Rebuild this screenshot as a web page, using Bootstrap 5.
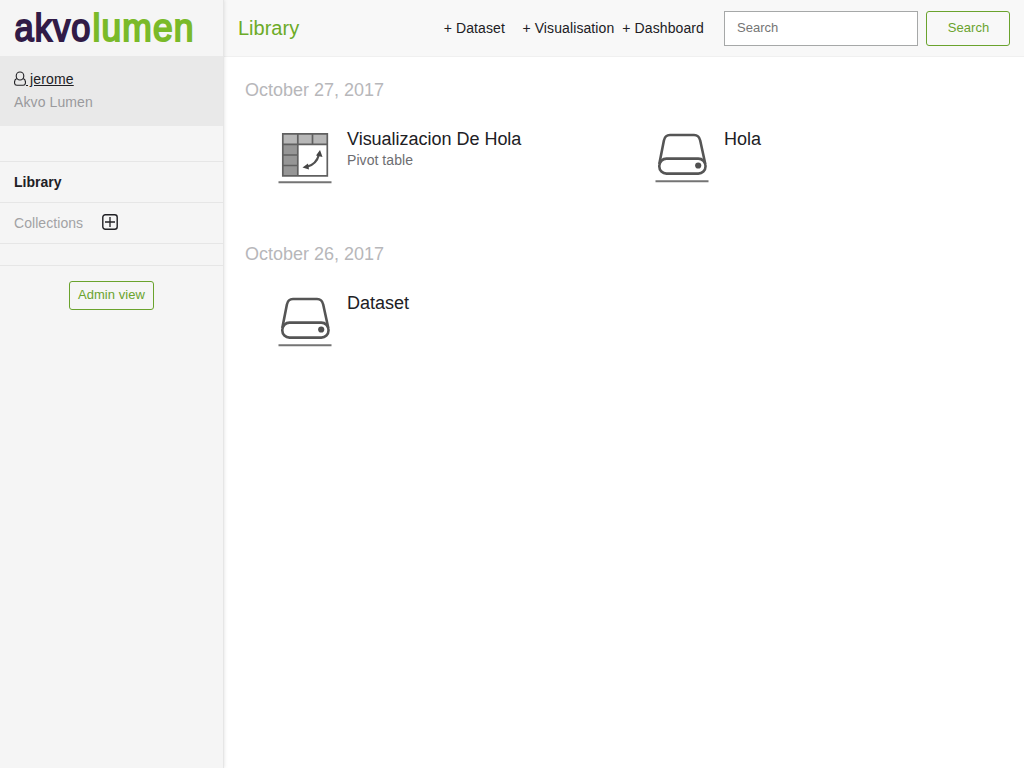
<!DOCTYPE html>
<html lang="en">
<head>
<meta charset="utf-8">
<title>Library</title>
<link href="https://cdn.jsdelivr.net/npm/bootstrap@5.3.0/dist/css/bootstrap.min.css" rel="stylesheet">
<style>
body{font-family:"Liberation Sans",Arial,sans-serif;font-size:14px;line-height:20px;color:#202024}
.side{width:224px;background:#f5f5f5;border-right:1px solid #e6e6e6;box-shadow:0 0 4px rgba(0,0,0,.13);z-index:2}
.brand-box{height:56px}
.brand-box text{letter-spacing:1.2px;stroke-width:1.9}
.user-box{height:70px;background:#e9e9e9;padding:13px 14px 0}
.user-box a{color:#202024;line-height:21px;letter-spacing:.15px}
.user-box svg{vertical-align:-2px}
.org{color:#9a9a9d;line-height:24px;letter-spacing:.1px}
.side-nav{padding-top:35px}
.side-item{height:41px;border-top:1px solid #e6e6e6;padding:0 14px}
.side-item.gap-row{height:22px}
.side-item.admin-row{height:auto;padding-top:15px}
.soft{color:#a2a2a4;gap:19px;letter-spacing:.06px}
.soft svg{margin-top:-2px}
.btn-lumen{--bs-btn-color:#6aa32d;--bs-btn-border-color:#6aa32d;--bs-btn-hover-color:#fff;--bs-btn-hover-bg:#6aa32d;font-size:13px;line-height:15px;border-radius:3px;padding:0;letter-spacing:.06px}
.btn-admin{width:85px;height:29px;padding-bottom:2px}
.btn-search{width:84px;height:35px;padding:0 0 2px 1px}
.topbar{height:57px;background:#f8f8f8;border-bottom:1px solid #f0f0f0;padding:0 14px}
.topbar h1{font-size:20px;color:#6cab27;line-height:24px}
.create{margin-right:20px;letter-spacing:.1px}
.create a{color:#202024}
.create .vis{margin:0 8px 0 17.500px}
.search-input{width:194px;height:35px;border:1px solid #a6a8a8;border-radius:0;font-size:13px;padding:0 12px 2px}
.search-input::placeholder{color:#757575}
.day{height:164px;padding:21px 21px 0}
.day h2{font-size:18px;line-height:24px;color:#b7b7ba}
.entry{padding-left:33px;width:377px}
.entry svg{margin-top:4px}
.entry-text{margin:2px 0 0 15px}
.entry h3{font-size:18px;line-height:22px;letter-spacing:-.02px}
.kind{color:#6d6d71;line-height:20px;letter-spacing:.06px}
</style>
</head>
<body>
<svg class="d-none">
  <symbol id="disk" viewBox="0 0 54 54">
    <g fill="none" stroke="#555" stroke-width="2.6">
      <path d="M4.300 34 8.900 10.500Q10 5 15 5H39Q44 5 45.200 10.500L50.300 34"/>
      <rect x="4.300" y="28.600" width="46.200" height="15" rx="7.200"/>
    </g>
    <circle cx="43.200" cy="35.500" r="3.100" fill="#505050"/>
    <path d="M.5 51.300H53.500" stroke="#747474" stroke-width="2"/>
  </symbol>
</svg>
<div class="d-flex vh-100">
  <aside class="side flex-shrink-0 position-relative">
    <div class="brand-box">
      <svg class="d-block" width="223" height="56" role="img" font-family="Liberation Sans Narrow,Liberation Sans,sans-serif" font-size="38">
        <text x="14.500" y="41.400" textLength="77" lengthAdjust="spacingAndGlyphs" fill="#311b47" stroke="#311b47">akvo</text>
        <text x="92.500" y="41.400" textLength="102" lengthAdjust="spacingAndGlyphs" fill="#7aba29" stroke="#7aba29">lumen</text>
      </svg>
    </div>
    <div class="user-box">
      <a href="#"><svg width="12" height="15" viewBox="0 0 12 15" fill="none" stroke="#202024" stroke-width="1.100"><ellipse cx="6" cy="5" rx="3.800" ry="4"/><path d="M2.800 7.400C1.200 7.900.5 9.500.5 11.500.5 13.500 1.500 14.300 2.800 14.300H9.200C10.500 14.300 11.500 13.500 11.500 11.500 11.500 9.500 10.800 7.900 9.200 7.400"/></svg> jerome</a>
      <div class="org">Akvo Lumen</div>
    </div>
    <nav class="side-nav">
      <div class="side-item d-flex align-items-center fw-bold">Library</div>
      <div class="side-item d-flex align-items-center soft">Collections
        <svg width="16" height="16" viewBox="0 0 16 16" fill="none" stroke="#202024"><rect x=".8" y=".8" width="14.400" height="14.400" rx="2.500" stroke-width="1.400"/><path d="M8 3v10M3 8h10" stroke-width="1.300"/></svg>
      </div>
      <div class="side-item gap-row"></div>
      <div class="side-item admin-row text-center"><button class="btn btn-lumen btn-admin">Admin view</button></div>
    </nav>
  </aside>
  <main class="flex-grow-1">
    <header class="topbar d-flex align-items-center">
      <h1 class="m-0 me-auto">Library</h1>
      <div class="create d-flex">
        <a class="text-decoration-none" href="#">+ Dataset</a>
        <a class="text-decoration-none vis" href="#">+ Visualisation</a>
        <a class="text-decoration-none" href="#">+ Dashboard</a>
      </div>
      <form class="d-flex gap-2">
        <input class="form-control search-input" placeholder="Search">
        <button type="button" class="btn btn-lumen btn-search">Search</button>
      </form>
    </header>
    <section class="day">
      <h2 class="m-0">October 27, 2017</h2>
      <div class="d-flex mt-4">
        <div class="entry d-flex">
          <svg width="54" height="54" viewBox="0 0 54 54">
            <path d="M5 4H50V14H5z" fill="#b7b7b7"/><path d="M5 14H20V46H5z" fill="#969696"/>
            <path d="M4.800 3.800H49.300V45.800H4.800zM5 14.300H49.300M19.800 4V46M34.500 4V14.300M5 25H19.800M5 35.500H19.800" fill="none" stroke="#606060" stroke-width="1.700"/>
            <path d="M28.500 37Q38.500 34.500 41 24.500" fill="none" stroke="#505050" stroke-width="2.200"/>
            <path d="M24.500 37.500 30 33.500 31 39.500zM42 20 38 25.500 44.500 27z" fill="#454545"/>
            <path d="M.5 52.200H53.500" stroke="#747474" stroke-width="2"/>
          </svg>
          <div class="entry-text"><h3 class="m-0">Visualizacion De Hola</h3><div class="kind">Pivot table</div></div>
        </div>
        <div class="entry d-flex"><svg width="54" height="54"><use href="#disk"/></svg><div class="entry-text"><h3 class="m-0">Hola</h3></div></div>
      </div>
    </section>
    <section class="day">
      <h2 class="m-0">October 26, 2017</h2>
      <div class="d-flex mt-4">
        <div class="entry d-flex"><svg width="54" height="54"><use href="#disk"/></svg><div class="entry-text"><h3 class="m-0">Dataset</h3></div></div>
      </div>
    </section>
  </main>
</div>
<script src="https://cdn.jsdelivr.net/npm/bootstrap@5.3.0/dist/js/bootstrap.bundle.min.js"></script>
</body>
</html>
